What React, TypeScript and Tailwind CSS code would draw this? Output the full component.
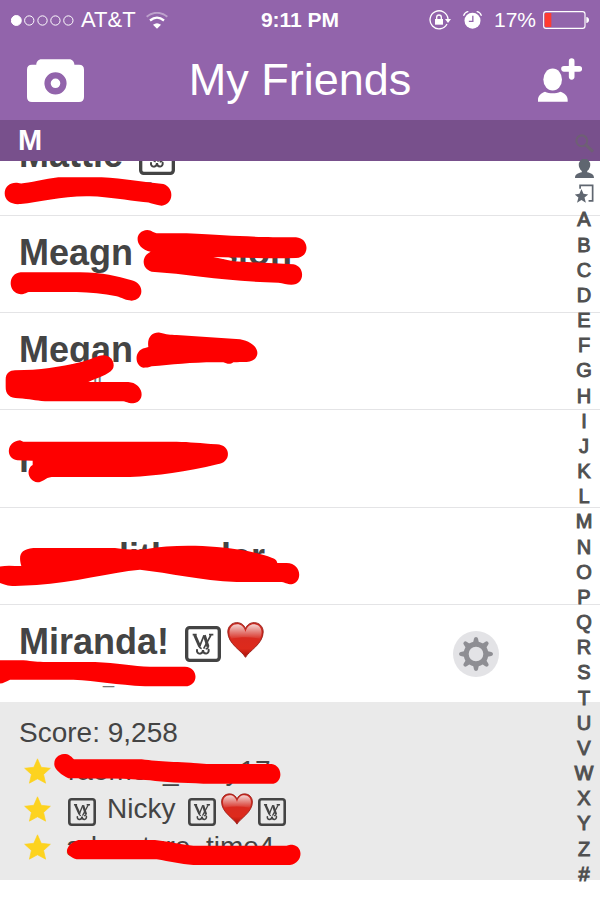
import React, { useId } from "react";

const INDEX_LETTERS = "ABCDEFGHIJKLMNOPQRSTUVWXYZ#".split("");

/* ---------- icons ---------- */

function CameraIcon() {
  return (
    <svg viewBox="0 0 172 129" className="h-[43px] w-[57px]" aria-hidden="true">
      <path
        fill="#fff"
        d="M15 17h13c0-9 6-17 16-17h83c10 0 16 8 16 17h14q15 0 15 15v82q0 15-15 15H15q-15 0-15-15V32q0-15 15-15Z"
      />
      <circle cx="86" cy="73" r="24" fill="none" stroke="#9264ab" strokeWidth="19" />
    </svg>
  );
}

function AddFriendIcon() {
  return (
    <svg viewBox="0 0 132 131" className="size-11" fill="#fff" aria-hidden="true">
      <ellipse cx="44" cy="64" rx="28" ry="33" />
      <path d="M0 131v-6c0-12 10-20 21-24 14 6 32 6 46 0 12 4 22 12 22 24v6Z" />
      <path d="M101 9v47M78 32h46" stroke="#fff" strokeWidth="17" strokeLinecap="round" />
    </svg>
  );
}

function WifiIcon() {
  return (
    <svg viewBox="0 0 66 50" className="h-[17px] w-[22px]" fill="none" stroke="#fff" aria-hidden="true">
      <path d="M2 14Q33-10 64 14" strokeWidth="6" opacity=".4" />
      <path d="M12 25q21-17 42 0" strokeWidth="7" />
      <path d="M33 50 21 38q12-9 24 0Z" fill="#fff" stroke="none" />
    </svg>
  );
}

function RotationLockIcon() {
  return (
    <svg viewBox="0 0 66 60" className="h-5 w-[22px]" fill="none" stroke="#fff" strokeWidth="4" aria-hidden="true">
      <path d="M54 42A27 27 0 1 1 57 27" />
      <path d="M48 27h18l-9 12Z" fill="#fff" stroke="none" />
      <path d="M18 27h24v17H18Z" fill="#fff" stroke="none" />
      <path d="M23 28v-6a7 7 0 0 1 14 0v6" />
    </svg>
  );
}

function AlarmIcon() {
  return (
    <svg viewBox="0 0 56 54" className="h-[18px] w-[19px]" fill="none" aria-hidden="true">
      <circle cx="28" cy="29" r="24" fill="#fff" />
      <path d="M2 13Q5 4 14 2M54 13Q51 4 42 2" stroke="#fff" strokeWidth="4" strokeLinecap="round" />
      <path d="M29 14v17H17" stroke="#9264ab" strokeWidth="4" />
    </svg>
  );
}

function BatteryIcon() {
  return (
    <svg viewBox="0 0 138 54" className="h-[18px] w-[46px]" fill="none" aria-hidden="true">
      <rect x="2" y="2" width="124" height="50" rx="7" stroke="#fff" strokeWidth="3.5" />
      <path d="M130 18q8 1 8 9t-8 9Z" fill="#fff" />
      <path d="M8 6h17v42H8q-3 0-3-3V9q0-3 3-3Z" fill="#ff3b30" />
    </svg>
  );
}

function GlyphBox({ className }: { className: string }) {
  return (
    <svg viewBox="0 0 108 108" className={className} fill="none" stroke="#444" aria-hidden="true">
      <rect x="5" y="5" width="98" height="98" rx="9" strokeWidth="10" />
      <path d="M23 26h12M72 26h13" strokeWidth="5" />
      <path d="m29 27 15 34M58 28l11 34" strokeWidth="9" />
      <path d="m44 61 13-33M78 27 56 68" strokeWidth="5" />
      <path
        d="M46 56c-6 6-2 10 4 12M68 58c4 6 0 9-6 11"
        strokeWidth="5"
      />
      <path d="M36 72c-2 14 17 15 18 0 1 15 19 14 17-1" strokeWidth="6" strokeLinecap="round" />
    </svg>
  );
}

function Heart({ className }: { className: string }) {
  const id = useId();
  return (
    <svg viewBox="0 0 110 108" className={className} aria-hidden="true">
      <defs>
        <linearGradient id={id + "body"} x1="0" y1="0" x2="0" y2="1">
          <stop offset="0" stopColor="#c9281f" />
          <stop offset=".45" stopColor="#d92a1f" />
          <stop offset=".75" stopColor="#dd2a1c" />
          <stop offset="1" stopColor="#a80f08" />
        </linearGradient>
        <linearGradient id={id + "shine"} x1="0" y1="0" x2="0" y2="1">
          <stop offset="0" stopColor="#fff" stopOpacity=".8" />
          <stop offset="1" stopColor="#fff" stopOpacity=".05" />
        </linearGradient>
      </defs>
      <path
        d="M55 106C45 87 2 66 2 30 2 13 14 2 29 2c13 0 22 7 26 18C59 9 68 2 81 2c15 0 27 11 27 28 0 36-43 57-53 76Z"
        fill={`url(#${id}body)`}
        stroke="#9c231d"
        strokeWidth="3"
      />
      <path
        d="M55 30C50 13 41 7 30 7 16 7 7 17 7 31c0 8 2 13 5 19 28-6 58-6 86 0 3-6 5-11 5-19 0-14-9-24-23-24-11 0-20 6-25 23Z"
        fill={`url(#${id}shine)`}
      />
    </svg>
  );
}

function Star() {
  return (
    <svg viewBox="0 0 80 76" className="h-[26px] w-[27px] shrink-0" aria-hidden="true">
      <path
        d="m40 2 11 25 27 3-20 18 6 26-24-13-24 13 6-26L2 30l27-3Z"
        fill="#fdd31f"
        stroke="#fdd31f"
        strokeWidth="2"
        strokeLinejoin="round"
      />
    </svg>
  );
}

function GearIcon() {
  return (
    <svg viewBox="-50 -50 100 100" className="size-[34px]" aria-hidden="true">
      <circle r="29" fill="none" stroke="#8e8e93" strokeWidth="15" />
      {[0, 45, 90, 135, 180, 225, 270, 315].map((angle) => (
        <path
          key={angle}
          d="M-9-31-6-45q1-5 6-5t6 5l3 14Z"
          fill="#8e8e93"
          transform={`rotate(${angle})`}
        />
      ))}
    </svg>
  );
}

function SearchIcon() {
  return (
    <svg viewBox="0 0 56 56" className="size-[19px]" fill="none" stroke="#6e6074" aria-hidden="true">
      <circle cx="20" cy="20" r="16" strokeWidth="6" />
      <path d="m32 32 21 20" strokeWidth="9" />
    </svg>
  );
}

function PersonIcon() {
  return (
    <svg viewBox="0 0 56 56" className="size-[19px]" fill="#5f6670" aria-hidden="true">
      <ellipse cx="28" cy="18" rx="17" ry="19" />
      <path d="M20 32h16v7c11 3 20 5 20 17H0c0-12 9-14 20-17Z" />
    </svg>
  );
}

function StarPageIcon() {
  return (
    <svg viewBox="0 0 56 56" className="size-[19px]" fill="none" aria-hidden="true">
      <path d="M15 14V4h37v46H40" stroke="#5f6670" strokeWidth="5" />
      <path d="m19 15 6 14 14 2-11 9 4 15-13-8-13 8 4-15-11-9 14-2Z" fill="#5f6670" />
    </svg>
  );
}

/* ---------- marker strokes drawn over names ---------- */

function Scribble({ top, paths }: { top: number; paths: string[] }) {
  return (
    <svg
      viewBox={`0 ${top} 960 291`}
      className="pointer-events-none absolute top-0 left-0 h-[97px] w-80 overflow-visible"
      fill="#fe0000"
      aria-hidden="true"
    >
      {paths.map((d) => (
        <path key={d} d={d} />
      ))}
    </svg>
  );
}

/* ---------- list ---------- */

const nameClass = "flex h-11 items-center whitespace-pre text-[36px] leading-[44px] font-bold text-[#444]";
const userClass = "block h-6 text-[20px] leading-6 text-[#777]";

function StatusBar() {
  return (
    <div className="grid h-10 grid-cols-[1fr_auto_1fr] items-center px-[11px] text-[21px] leading-10">
      <div className="flex items-center">
        <svg viewBox="0 0 190 32" className="mr-[7px] h-[11px] w-[63px]" fill="none" stroke="#fff" strokeWidth="3" aria-hidden="true">
          <circle cx="16" cy="16" r="15" fill="#fff" />
          <circle cx="55" cy="16" r="14" />
          <circle cx="95" cy="16" r="14" />
          <circle cx="134" cy="16" r="14" />
          <circle cx="173" cy="16" r="14" />
        </svg>
        <span className="mr-[10px] text-[22px]">AT&amp;T</span>
        <WifiIcon />
      </div>
      <span className="font-bold">9:11 PM</span>
      <div className="flex items-center justify-end">
        <RotationLockIcon />
        <span className="w-3" />
        <AlarmIcon />
        <span className="mr-[7px] ml-3">17%</span>
        <BatteryIcon />
      </div>
    </div>
  );
}

export default function App() {
  return (
    <div className="relative min-h-screen overflow-hidden bg-white font-['Liberation_Sans',Arial,sans-serif]">
      <header className="bg-[#9264ab] text-white">
        <StatusBar />
        <div className="grid h-20 grid-cols-[1fr_auto_1fr] items-center px-[18px]">
          <button type="button" aria-label="Camera" className="ml-[9px] justify-self-start">
            <CameraIcon />
          </button>
          <h1 className="text-[45px] leading-[80px]">My Friends</h1>
          <button type="button" aria-label="Add friend" className="justify-self-end">
            <AddFriendIcon />
          </button>
        </div>
      </header>

      <h2 className="h-[41px] bg-[#78508c] pl-[18px] text-[29px] leading-10 font-bold text-white">M</h2>

      <main>
        <div className="relative h-[55px] border-b border-[#e4e4e6]">
          <div className="h-full overflow-hidden pl-[19px]">
            <div className="-mt-[43px] pt-[15px]">
              <div className={nameClass}>
                Mattie
                <GlyphBox className="mt-1 ml-4 size-9" />
              </div>
              <span className={`${userClass} pl-28`}>15</span>
            </div>
          </div>
          <Scribble
            top={138}
            paths={[
              "M62 267C35 270 14 258 14 235S35 200 55 204C70 210 130 192 175 187H305C370 189 440 204 490 207 524 218 522 268 485 272 462 270 455 262 430 261 380 256 330 246 270 244 190 242 120 262 62 267Z",
            ]}
          />
        </div>

        <ul className="grid h-[486px] grid-rows-5">
          <li className="relative border-b border-[#e4e4e6] pt-[15px] pl-[19px]">
            <div className={nameClass}>
              Meagn
              <span className="ml-[85px]">sion</span>
            </div>
            <Scribble
              top={303}
              paths={[
                "M452 410C402 400 401 347 442 345 455 345 460 355 475 355H560C690 362 740 366 888 367 930 370 930 428 888 429 790 431 710 427 640 426L700 439 880 448C917 455 915 509 874 509 860 509 850 504 835 503 680 500 570 477 455 470 425 462 422 424 452 410Z",
                "M62 538C22 534 22 475 62 472H240C310 473 350 484 395 496 435 505 433 556 395 557 375 556 365 548 350 544 310 536 270 532 230 531H90C80 531 75 538 62 538Z",
              ]}
            />
          </li>

          <li className="relative border-b border-[#e4e4e6] pt-[15px] pl-[19px]">
            <div className={nameClass}>Megan</div>
            <span className={`${userClass} pl-[74px]`}>ll</span>
            <Scribble
              top={10}
              paths={[
                "M445 112C440 80 460 66 480 69 500 74 510 75 530 76L720 89C788 102 784 155 740 157 725 157 715 157 700 158 690 166 680 162 670 158 590 156 520 164 455 170 445 174 440 174 430 174 404 170 400 122 435 115Z",
                "M45 182C120 182 180 172 240 158 275 150 290 138 310 137 340 138 346 168 338 178 325 197 290 204 265 217H385C430 220 440 275 400 281 385 282 380 275 365 275H135C105 273 90 268 55 266 30 266 16 255 17 230V210C17 190 30 182 45 182Z",
              ]}
            />
          </li>

          <li className="relative flex items-center border-b border-[#e4e4e6] pt-[3px] pl-[19px]">
            <div className={nameClass}>n</div>
            <Scribble
              top={301}
              paths={[
                "M60 392 70 396H530C570 397 600 400 650 404 694 405 696 460 652 464 560 487 470 499 390 502H155C135 504 130 518 112 518 84 514 77 478 98 466V453L52 452C17 448 17 396 60 392Z",
              ]}
            />
          </li>

          <li className="relative flex items-center border-b border-[#e4e4e6] pt-[3px] pl-[19px]">
            <div className={nameClass}>
              <span className="ml-[100px]">lith</span>
              <span className="ml-[48px]">ler</span>
            </div>
            <Scribble
              top={23}
              paths={[
                "M100 143H345C380 147 410 151 440 146 500 135 580 134 650 140 720 146 780 158 815 172 827 176 830 180 832 188H860C904 188 910 244 875 252 860 252 855 245 840 245H710C600 240 510 218 420 208 330 216 220 247 110 254L45 257C20 257 10 250-3 247V199C20 194 40 197 64 197 55 165 60 147 100 143Z",
              ]}
            />
          </li>

          <li className="relative flex items-start justify-between pt-[15px] pr-[101px] pl-[19px]">
            <div>
              <div className={nameClass}>
                Miranda!
                <GlyphBox className="mt-1 ml-4 size-9" />
                <Heart className="-mt-1 ml-[6px] h-9 w-[37px]" />
              </div>
              <span className={`${userClass} pl-[84px]`}>_</span>
            </div>
            <button
              type="button"
              aria-label="Friend settings"
              className="mt-[11px] flex size-[46px] items-center justify-center rounded-full bg-[#e3e3e6]"
            >
              <GearIcon />
            </button>
            <Scribble
              top={314}
              paths={[
                "M-3 480H70C100 483 110 485 140 485H285C350 487 400 498 450 499H555C597 501 597 557 555 558H435C350 553 290 542 220 538H30C15 545 10 549-3 550Z",
              ]}
            />
          </li>
        </ul>

        <section className="relative bg-[#eaeaea] pt-3 pb-[14px] pl-[19px] text-[28px] leading-[38px] text-[#444]">
          <p>Score: 9,258</p>
          <ol>
            <li className="flex h-[38px] items-center pl-[5px]">
              <Star />
              <span className="ml-[17px]">raemon_</span>
              <span className="ml-[47px]">y17</span>
            </li>
            <li className="flex h-[38px] items-center pl-[5px]">
              <Star />
              <GlyphBox className="mt-[5px] ml-[17px] size-7" />
              <span className="mr-[13px] ml-[11px]">Nicky</span>
              <GlyphBox className="mt-[5px] size-7" />
              <Heart className="mx-[5px] h-8 w-8" />
              <GlyphBox className="mt-[5px] size-7" />
            </li>
            <li className="flex h-[38px] items-center pl-[5px]">
              <Star />
              <span className="ml-[15px]">ad</span>
              <span className="ml-[45px]">ture_time4</span>
            </li>
          </ol>
          <Scribble
            top={21}
            paths={[
              "M192 177C207 177 212 183 222 193H425C480 201 530 200 620 207H815C848 212 850 260 820 266H610C550 264 490 262 450 256 370 248 290 251 205 250 185 240 160 222 163 205 163 190 175 178 192 177Z",
              "M235 435H465C510 440 550 450 580 452H860C870 449 875 449 880 450 912 456 908 504 870 510H580C540 507 510 500 470 493H230C215 489 200 478 201 466 205 448 220 440 235 435Z",
            ]}
          />
        </section>
      </main>

      <nav
        aria-label="Alphabet index"
        className="absolute top-[131px] right-0 grid h-[755px] w-8 auto-rows-fr justify-items-center text-[20px] leading-[26px] text-[#505050] [-webkit-text-stroke:1px_#505050]"
      >
        <a href="#search" aria-label="Search" className="flex items-center">
          <SearchIcon />
        </a>
        <a href="#me" aria-label="Me" className="flex items-center">
          <PersonIcon />
        </a>
        <a href="#best" aria-label="Best friends" className="flex items-center">
          <StarPageIcon />
        </a>
        {INDEX_LETTERS.map((letter) => (
          <a key={letter} href={`#${letter}`}>
            {letter}
          </a>
        ))}
      </nav>
    </div>
  );
}
